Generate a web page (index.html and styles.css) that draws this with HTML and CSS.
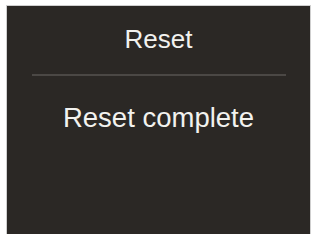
FILE: index.html
```html
<!DOCTYPE html>
<html>
<head>
<meta charset="utf-8">
<link rel="stylesheet" href="styles.css">
</head>
<body>
<div class="screen">
  <div class="title">Reset</div>
  <div class="divider"></div>
  <div class="message">Reset complete</div>
</div>
</body>
</html>
```
FILE: styles.css
```css
html, body {
  margin: 0;
  padding: 0;
  background: #ffffff;
}
body {
  width: 315px;
  height: 234px;
  overflow: hidden;
  font-family: "Liberation Sans", Arial, sans-serif;
}
.screen {
  margin: 5px 4px 0 6px;
  height: 229px;
  background: #2b2825;
  border: 1px solid #cfcfcf;
  border-bottom: none;
  display: flex;
  flex-direction: column;
  align-items: center;
  color: #f2f2ef;
  box-sizing: border-box;
  padding-top: 20px;
}
.title {
  font-size: 26px;
  line-height: 26px;
}
.divider {
  margin-top: 22px;
  width: 254px;
  height: 2px;
  background: #4b4845;
}
.message {
  margin-top: 28px;
  font-size: 27.5px;
  line-height: 27px;
}
```
